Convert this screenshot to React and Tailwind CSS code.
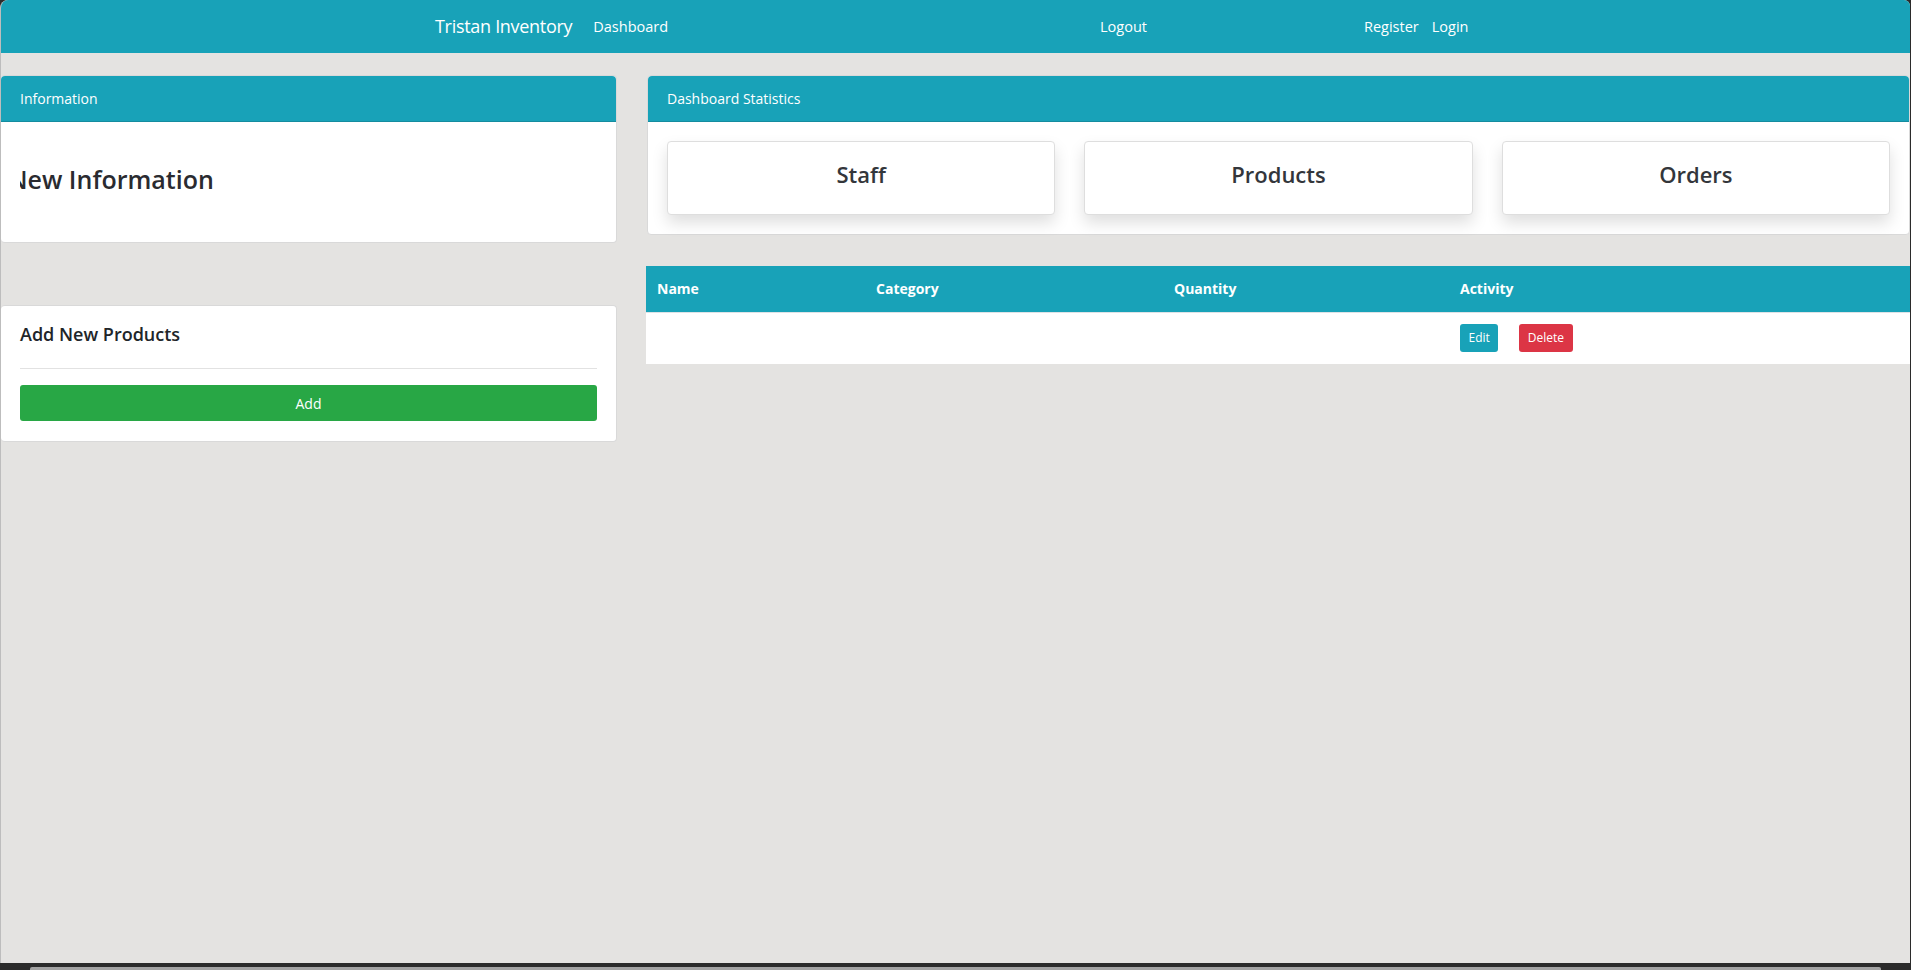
import React from "react";

const font = { fontFamily: '"Open Sans", "Noto Sans", Arial, sans-serif' };

const stats = ["Staff", "Products", "Orders"];

const CardHeader = ({ children }) => (
  <div className="h-[46px] flex items-center px-[19px] bg-[#18a2b8] border-b border-[#148c9f] text-white text-[14px] rounded-t-[4px]">
    {children}
  </div>
);

export default function App() {
  return (
    <div className="w-full h-[970px] bg-[#2b2b2b] flex flex-col" style={font}>
      <div className="h-[963px] mr-[1px] rounded-tl-[8px] rounded-tr-[6px] overflow-hidden bg-[#e4e3e1] border-l border-[#bdbdbd] flex flex-col">
        {/* Navbar */}
        <nav className="h-[53px] shrink-0 bg-[#18a2b8] flex items-center text-white pl-[434px]">
          <div className="w-[665px] flex items-center">
            <span className="text-[18px] tracking-[-0.3px]">Tristan Inventory</span>
            <span className="ml-[21px] text-[14.5px]">Dashboard</span>
          </div>
          <div className="w-[264px] text-[14.5px]">Logout</div>
          <div className="flex items-center gap-[13px] text-[14.5px]">
            <span>Register</span>
            <span>Login</span>
          </div>
        </nav>

        <div className="flex pt-[22px] gap-[29px]">
          {/* Left column */}
          <div className="w-[616px] shrink-0 flex flex-col">
            <div className="bg-white rounded-[4px] border border-[#d9d9d9] border-l-0 h-[168px] flex flex-col">
              <CardHeader>Information</CardHeader>
              <div className="flex-1 flex items-center px-[19px] pb-[5px]">
                <div className="overflow-hidden w-full">
                  <h4 className="-ml-[12px] text-[25px] font-semibold text-[#2a2b30] whitespace-nowrap">
                    New Information
                  </h4>
                </div>
              </div>
            </div>

            <div className="mt-[62px] bg-white rounded-[4px] border border-[#d9d9d9] border-l-0 h-[137px] px-[19px] pt-[15px]">
              <h5 className="text-[18px] font-semibold text-[#212529]">Add New Products</h5>
              <hr className="mt-[20px] border-t border-[#e2e2e2]" />
              <button className="mt-[16px] w-full h-[36px] bg-[#28a745] rounded-[3px] text-white text-[14px]">
                Add
              </button>
            </div>
          </div>

          {/* Right column */}
          <div className="flex-1 flex flex-col">
            <div className="ml-[1px] bg-white rounded-[4px] border border-[#d9d9d9] h-[160px] flex flex-col">
              <CardHeader>Dashboard Statistics</CardHeader>
              <div className="flex gap-[29px] px-[19px] pt-[19px]">
                {stats.map((s) => (
                  <div
                    key={s}
                    className="flex-1 h-[74px] bg-white border border-[#dedede] rounded-[4px] shadow-[0_8px_16px_rgba(0,0,0,0.13)] flex items-center justify-center pb-[7px]"
                  >
                    <span className="text-[22px] font-semibold text-[#33363b]">{s}</span>
                  </div>
                ))}
              </div>
            </div>

            <table className="mt-[31px] w-full border-collapse text-[14px]">
              <thead>
                <tr className="h-[46px] bg-[#18a2b8] text-white text-left border-b border-[#dee2e6]">
                  <th className="w-[219px] pl-[11px] font-bold">Name</th>
                  <th className="w-[298px] pl-[11px] font-bold">Category</th>
                  <th className="w-[286px] pl-[11px] font-bold">Quantity</th>
                  <th className="pl-[11px] font-bold">Activity</th>
                </tr>
              </thead>
              <tbody>
                <tr className="h-[52px] bg-white">
                  <td></td>
                  <td></td>
                  <td></td>
                  <td className="pl-[11px]">
                    <div className="flex items-center gap-[21px]">
                      <button className="h-[28px] px-[8.5px] bg-[#18a2b8] rounded-[3px] text-white text-[12px]">
                        Edit
                      </button>
                      <button className="h-[28px] px-[8.5px] bg-[#dc3545] rounded-[3px] text-white text-[12px]">
                        Delete
                      </button>
                    </div>
                  </td>
                </tr>
              </tbody>
            </table>
          </div>
        </div>
      </div>

      {/* window bottom strip with scrollbar */}
      <div className="h-[7px] flex flex-col justify-end">
        <div className="h-[3px] mx-[30px] bg-[#a3a3a3] rounded-t-[2px]" />
      </div>
    </div>
  );
}
